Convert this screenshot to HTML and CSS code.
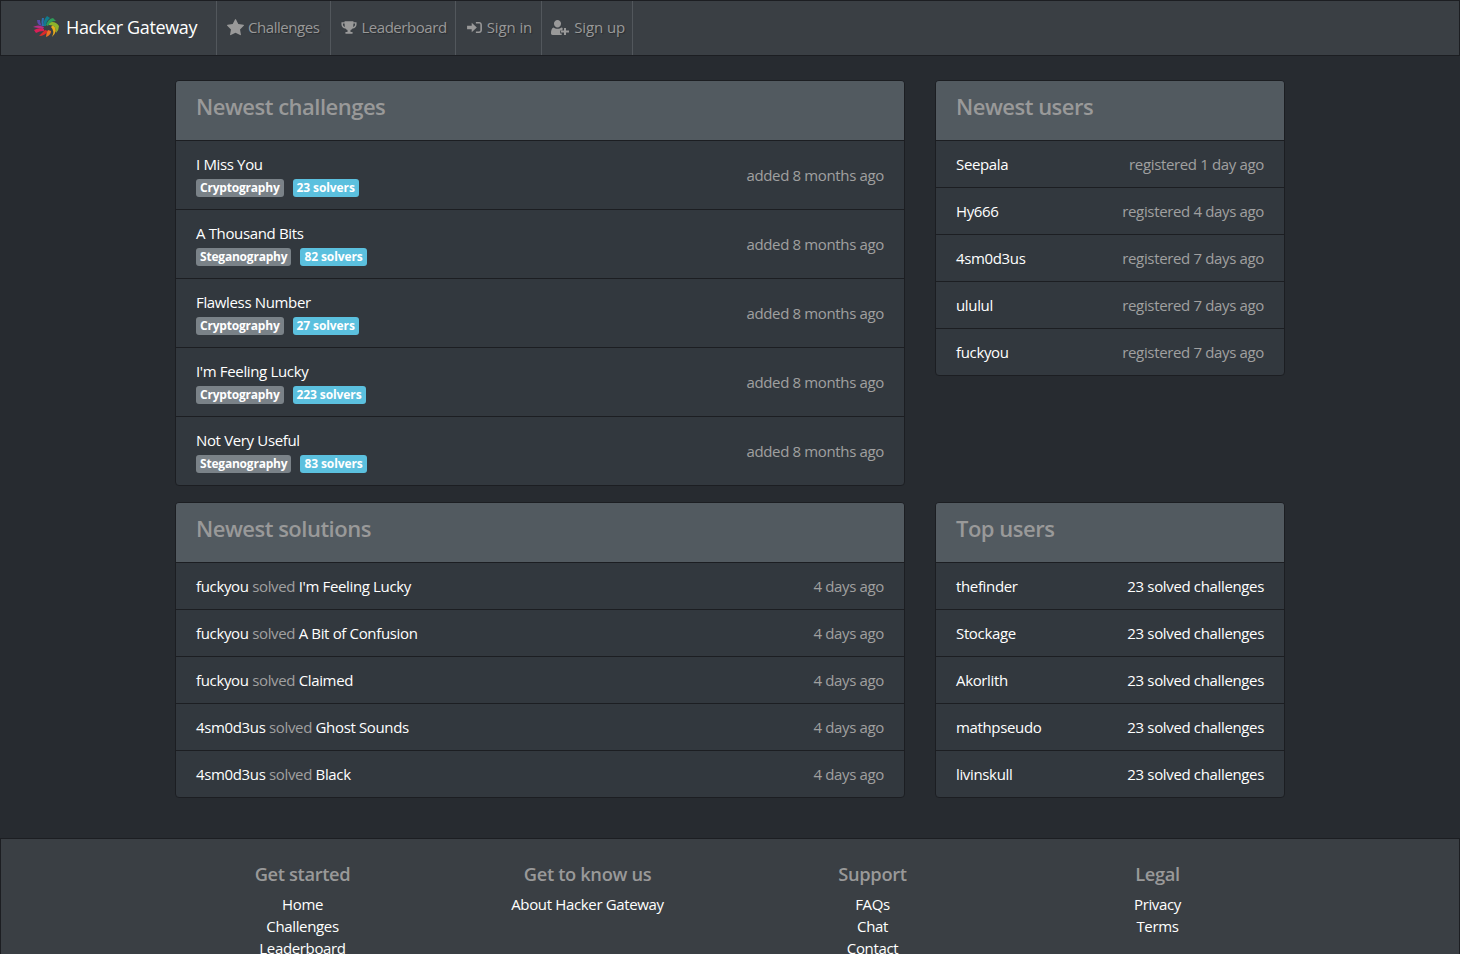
FILE: index.html
```
<!DOCTYPE html>
<html lang="en">
<head>
<meta charset="utf-8">
<title>Hacker Gateway</title>
<link rel="stylesheet" href="styles.css">
</head>
<body>
<nav class="navbar">
  <a class="brand" href="#">
    <svg class="logo" viewBox="0 0 26 22" width="26" height="22">
      <path d="M0 11 Q5 8 11 11 L10 13 Q5 12 0 11Z" fill="#b22f86"/>
      <path d="M1 14 Q6 11 11 13 L11 15 Q6 15 3 17Z" fill="#d81f56"/>
      <path d="M6 20 Q9 17 12 14 L15 15 Q12 20 6 20Z" fill="#dc2a2a"/>
      <path d="M13 21 Q13 17 15 14 L18 15 Q18 19 13 21Z" fill="#ef6f22"/>
      <path d="M19 21 Q22 15 18 11 L20 9 Q26 14 19 21Z" fill="#e9ad1c"/>
      <path d="M15 7 Q22 4 26 10 Q26 14 23 17 Q24 9 16 9Z" fill="#8db32b"/>
      <path d="M13 9 Q15 3 20 2 L23 5 Q17 5 15 10Z" fill="#2f9a58"/>
      <path d="M11 10 Q10 4 14 0 L17 2 Q13 5 13 10Z" fill="#117c8c"/>
      <path d="M9 10 Q8 5 9 2 L11 2 Q10 6 11 10Z" fill="#2f6fb0"/>
      <path d="M6 9 Q4 7 4 4 L7 4 Q7 7 9 10Z" fill="#5a4aa8"/>
    </svg>
    <span>Hacker Gateway</span>
  </a>
  <a class="nav-link challenges" href="#">
    <svg class="icon" viewBox="0 0 1664 1664" width="17" height="17"><path d="M1664 615q0 22-26 48l-363 354 86 500q1 7 1 20 0 21-10.500 35.500T1321 1587q-19 0-40-12l-449-236-449 236q-22 12-40 12-21 0-31.500-14.500T301 1537q0-6 2-20l86-500L25 663Q0 636 0 615q0-37 56-46l502-73L783 41q19-41 49-41t49 41l225 455 502 73q56 9 56 46z"/></svg>
    Challenges
  </a>
  <a class="nav-link leader" href="#">
    <svg class="icon" viewBox="0 0 18 16" width="16" height="15"><path d="M4 1h10v1h3.500v2.500c0 2.500-2 4.300-4.500 4.600-.6.900-1.400 1.500-2.300 1.800V13H13v2H5v-2h2.300v-2.100C6.400 10.600 5.600 10 5 9.100 2.500 8.800.5 7 .5 4.500V2H4V1zm0 2.600H2.200v1c0 1.200.8 2.200 2.200 2.700-.2-.9-.4-2.300-.4-3.700zm10 0c0 1.400-.2 2.800-.4 3.700 1.400-.5 2.200-1.500 2.200-2.700v-1H14z"/></svg>
    Leaderboard
  </a>
  <a class="nav-link signin" href="#">
    <svg class="icon" viewBox="0 0 16 14" width="15" height="13"><path d="M0 5h5V2l5.500 5L5 12V9H0V5z"/><path d="M9.500 1H13c1.700 0 3 1.300 3 3v6c0 1.700-1.300 3-3 3H9.500v-1.700H13c.7 0 1.300-.6 1.300-1.300V4c0-.7-.6-1.300-1.300-1.300H9.500V1z"/></svg>
    Sign in
  </a>
  <a class="nav-link signup" href="#">
    <svg class="icon" viewBox="0 0 18 15" width="18" height="15"><path d="M6.500 0a3.500 3.500 0 0 1 3.500 3.800c0 2-1.500 3.700-3.500 3.700S3 5.800 3 3.800A3.500 3.500 0 0 1 6.500 0z"/><path d="M2.500 7.500c1 .9 2.500 1.300 4 1.300s3-.4 4-1.300c.6.200 1 .5 1.400.9h-.4v2.100H9.200v3h1.500V15H1.500C.5 15 0 14.300 0 13.300 0 10.800.6 8 2.500 7.500z"/><path d="M13 8h2v2.500h3v2h-3V15h-2v-2.500h-3v-2h3V8z"/></svg>
    Sign up
  </a>
</nav>

<main class="container">
  <section class="card wide">
    <h2 class="card-title">Newest challenges</h2>
    <div class="row tall"><div class="cell"><a class="name" href="#">I Miss You</a><div class="badges"><span class="badge grey">Cryptography</span><span class="badge blue">23 solvers</span></div></div><span class="muted">added 8 months ago</span></div>
    <div class="row tall"><div class="cell"><a class="name" href="#">A Thousand Bits</a><div class="badges"><span class="badge grey">Steganography</span><span class="badge blue">82 solvers</span></div></div><span class="muted">added 8 months ago</span></div>
    <div class="row tall"><div class="cell"><a class="name" href="#">Flawless Number</a><div class="badges"><span class="badge grey">Cryptography</span><span class="badge blue">27 solvers</span></div></div><span class="muted">added 8 months ago</span></div>
    <div class="row tall"><div class="cell"><a class="name" href="#">I'm Feeling Lucky</a><div class="badges"><span class="badge grey">Cryptography</span><span class="badge blue">223 solvers</span></div></div><span class="muted">added 8 months ago</span></div>
    <div class="row tall"><div class="cell"><a class="name" href="#">Not Very Useful</a><div class="badges"><span class="badge grey">Steganography</span><span class="badge blue">83 solvers</span></div></div><span class="muted">added 8 months ago</span></div>
  </section>

  <section class="card narrow">
    <h2 class="card-title">Newest users</h2>
    <div class="row"><a class="name" href="#">Seepala</a><span class="muted">registered 1 day ago</span></div>
    <div class="row"><a class="name" href="#">Hy666</a><span class="muted">registered 4 days ago</span></div>
    <div class="row"><a class="name" href="#">4sm0d3us</a><span class="muted">registered 7 days ago</span></div>
    <div class="row"><a class="name" href="#">ululul</a><span class="muted">registered 7 days ago</span></div>
    <div class="row"><a class="name" href="#">fuckyou</a><span class="muted">registered 7 days ago</span></div>
  </section>

  <section class="card wide">
    <h2 class="card-title">Newest solutions</h2>
    <div class="row"><span><a class="name" href="#">fuckyou</a> <span class="muted">solved</span> <a class="name" href="#">I'm Feeling Lucky</a></span><span class="muted">4 days ago</span></div>
    <div class="row"><span><a class="name" href="#">fuckyou</a> <span class="muted">solved</span> <a class="name" href="#">A Bit of Confusion</a></span><span class="muted">4 days ago</span></div>
    <div class="row"><span><a class="name" href="#">fuckyou</a> <span class="muted">solved</span> <a class="name" href="#">Claimed</a></span><span class="muted">4 days ago</span></div>
    <div class="row"><span><a class="name" href="#">4sm0d3us</a> <span class="muted">solved</span> <a class="name" href="#">Ghost Sounds</a></span><span class="muted">4 days ago</span></div>
    <div class="row"><span><a class="name" href="#">4sm0d3us</a> <span class="muted">solved</span> <a class="name" href="#">Black</a></span><span class="muted">4 days ago</span></div>
  </section>

  <section class="card narrow">
    <h2 class="card-title">Top users</h2>
    <div class="row"><a class="name" href="#">thefinder</a><span class="solved">23 solved challenges</span></div>
    <div class="row"><a class="name" href="#">Stockage</a><span class="solved">23 solved challenges</span></div>
    <div class="row"><a class="name" href="#">Akorlith</a><span class="solved">23 solved challenges</span></div>
    <div class="row"><a class="name" href="#">mathpseudo</a><span class="solved">23 solved challenges</span></div>
    <div class="row"><a class="name" href="#">livinskull</a><span class="solved">23 solved challenges</span></div>
  </section>
</main>

<footer class="footer">
  <div class="footer-inner">
    <div class="footer-col"><h3>Get started</h3><a href="#">Home</a><a href="#">Challenges</a><a href="#">Leaderboard</a></div>
    <div class="footer-col"><h3>Get to know us</h3><a href="#">About Hacker Gateway</a></div>
    <div class="footer-col"><h3>Support</h3><a href="#">FAQs</a><a href="#">Chat</a><a href="#">Contact</a></div>
    <div class="footer-col"><h3>Legal</h3><a href="#">Privacy</a><a href="#">Terms</a></div>
  </div>
</footer>
</body>
</html>
```
FILE: styles.css
```
* { box-sizing: border-box; }
html, body { margin: 0; }
body {
  background: #272b30;
  color: #fff;
  font-family: "Open Sans", "Noto Sans", sans-serif;
  font-size: 15px;
  letter-spacing: -0.35px;
  line-height: 22px;
}
a { color: inherit; text-decoration: none; }

.navbar {
  display: flex;
  height: 56px;
  background: #3a3f44;
  border: 1px solid #1c1e22;
}
.brand {
  display: flex;
  align-items: center;
  gap: 7px;
  width: 216px;
  padding: 0 0 2px 32px;
  font-size: 18px;
  color: #fff;
  border-right: 1px solid #52575c;
}
.logo { flex: none; }
.nav-link {
  display: flex;
  align-items: center;
  gap: 4px;
  padding: 0 10px 2px 10px;
  color: #999;
  letter-spacing: -0.45px;
  text-shadow: 1px 1px 1px rgba(0, 0, 0, 0.3);
  border-right: 1px solid #52575c;
}
.challenges { padding-right: 11px; }
.leader { padding-right: 8px; }
.signin { padding: 0 9px 2px 11px; gap: 5px; letter-spacing: -0.1px; }
.signup { padding: 0 7px 2px 9px; gap: 5px; letter-spacing: -0.1px; }
.icon { fill: #999; flex: none; }

.container {
  width: 1140px;
  margin: 24px auto 0;
  padding: 0 15px;
  display: grid;
  grid-template-columns: 730px 350px;
  column-gap: 30px;
  row-gap: 16px;
  align-items: start;
}
.card {
  background: #32383e;
  border: 1px solid #1c1e22;
  border-radius: 4px;
  overflow: hidden;
}
.card-title {
  margin: 0;
  height: 59px;
  padding: 0 20px 10px;
  display: flex;
  align-items: center;
  background: #525a60;
  color: #999;
  font-size: 22px;
  font-weight: 600;
  letter-spacing: -0.5px;
}
.row {
  display: flex;
  justify-content: space-between;
  align-items: center;
  height: 47px;
  padding: 0 20px;
  border-top: 1px solid #1c1e22;
}
.row.tall { height: 69px; }
.cell { display: flex; flex-direction: column; }
.name { color: #fff; }
.muted { color: #a0a0a0; }
.solved { color: #fff; }
.badges { display: flex; gap: 9px; margin-top: 4px; }
.badge {
  height: 18px;
  padding: 0 4px;
  border-radius: 3px;
  font-size: 12px;
  font-weight: 700;
  line-height: 18px;
  letter-spacing: -0.2px;
  color: #fff;
}
.grey { background: #7a8288; }
.blue { background: #5bc0de; letter-spacing: -0.1px; }

.footer {
  margin-top: 40px;
  background: #3a3f44;
  border: 1px solid #1c1e22;
  padding: 23px 0 20px;
}
.footer-inner {
  width: 1140px;
  margin: 0 auto;
  display: grid;
  grid-template-columns: repeat(4, 1fr);
  text-align: center;
}
.footer-col { display: flex; flex-direction: column; align-items: center; }
.footer-col h3 {
  margin: 0 0 7px;
  font-size: 18.300px;
  font-weight: 600;
  line-height: 24px;
  color: #999;
}
```
